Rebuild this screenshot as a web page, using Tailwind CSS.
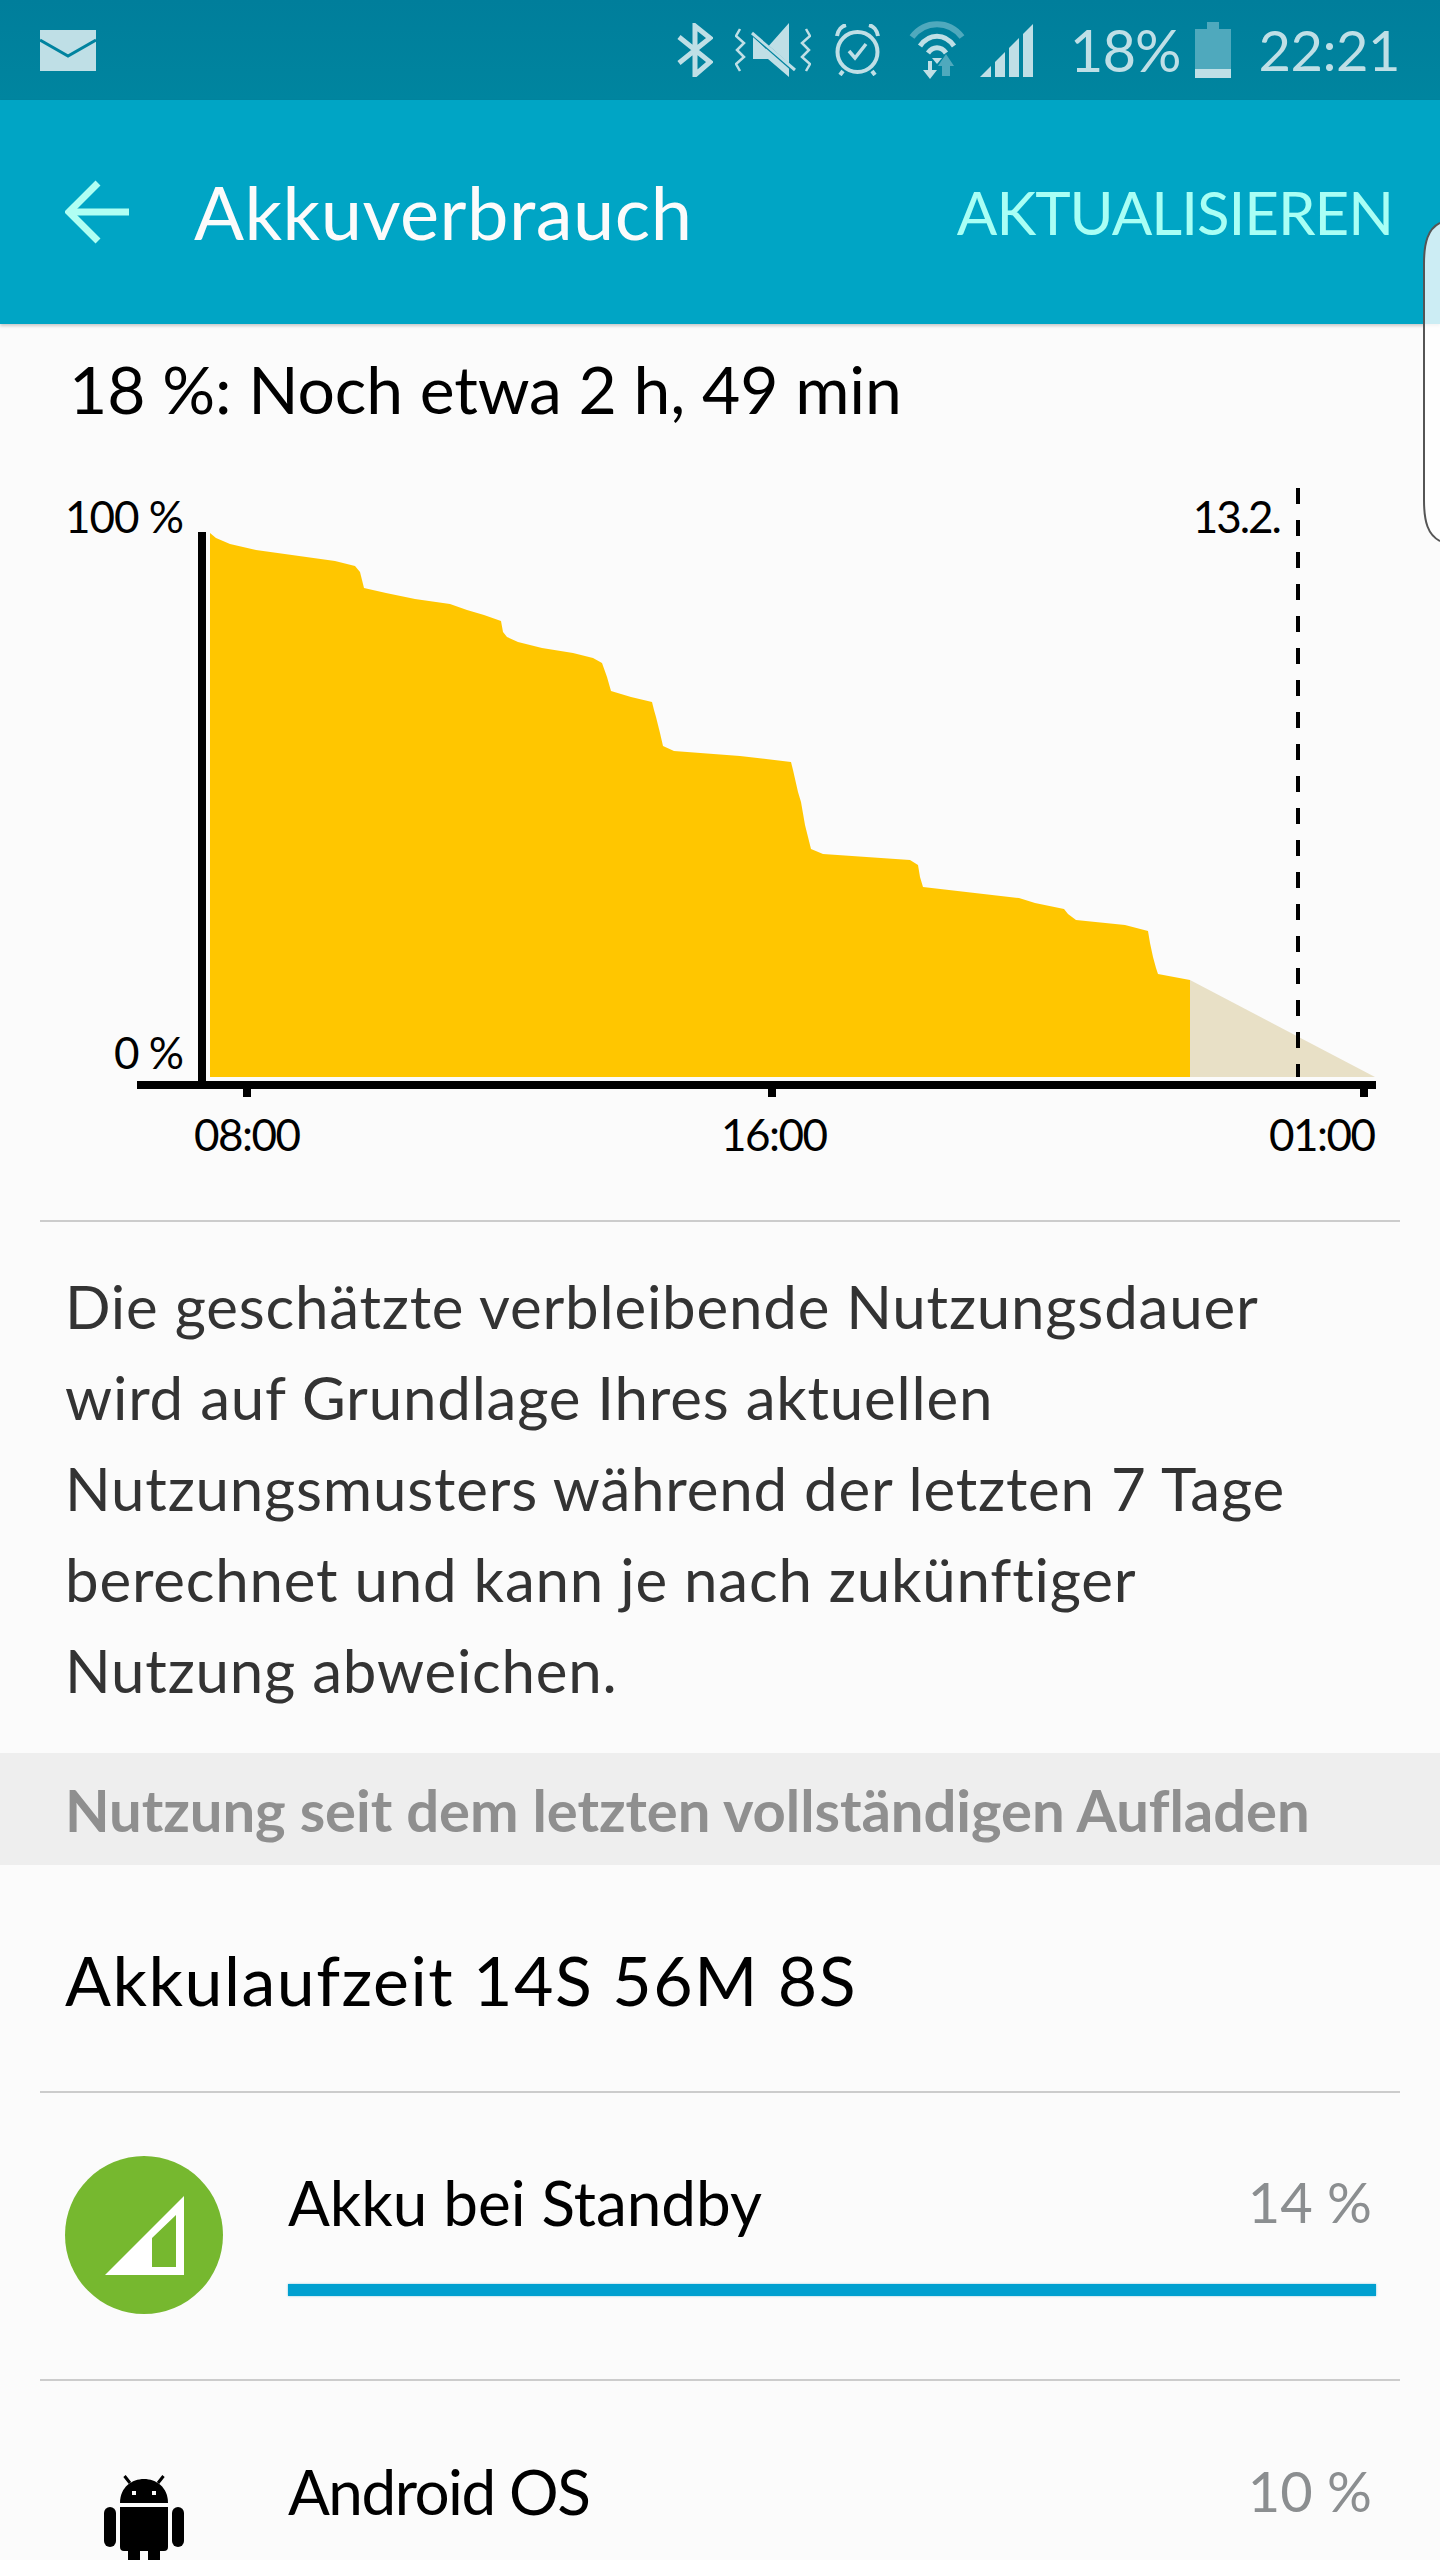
<!DOCTYPE html>
<html lang="de">
  <head>
    <meta charset="UTF-8" />
    <meta name="viewport" content="width=device-width, initial-scale=1.0" />
    <title>Akkuverbrauch</title>
    <script src="https://cdn.jsdelivr.net/npm/@tailwindcss/browser@4"></script>
  </head>
  <body class="relative w-[1440px] h-[2560px] overflow-hidden bg-[#fbfbfb] [font-family:Lato,sans-serif]">
    <!-- status bar -->
    <div class="flex items-center h-[100px] bg-gradient-to-b from-[#007e9b] to-[#00859f] text-[#bfdfe6]">
      <svg class="ml-[40px] w-[56px] h-[41px]" viewBox="0 0 56 41">
        <rect width="56" height="41" fill="#bfdfe6" />
        <polyline points="0,10 28,26 56,10" fill="none" stroke="#00839f" stroke-width="3" />
      </svg>
      <div class="ml-auto mr-[40px] flex items-center">
        <svg class="w-[36px] h-[54px]" viewBox="0 0 36 54">
          <polyline points="2,14 33,39 18,52 18,3 33,15 2,40" fill="none" stroke="#bfdfe6" stroke-width="5" />
        </svg>
        <svg class="ml-[22px] w-[76px] h-[54px]" viewBox="0 0 76 54">
          <polyline points="5,6 1,13 9,20 2,27 9,34 1,41 5,48" fill="none" stroke="#bfdfe6" stroke-width="2.5" />
          <polyline points="71,6 75,13 67,20 74,27 67,34 75,41 71,48" fill="none" stroke="#bfdfe6" stroke-width="2.5" />
          <path d="M18 13 L31 26 L54 0 V54 L33 36 H18 Z" fill="#bfdfe6" />
          <line x1="14" y1="8" x2="62" y2="50" stroke="#00839f" stroke-width="4" />
          <line x1="17" y1="10" x2="60" y2="47" stroke="#bfdfe6" stroke-width="3" />
        </svg>
        <svg class="ml-[23px] w-[47px] h-[52px]" viewBox="0 0 47 52">
          <circle cx="23.5" cy="28" r="20" fill="none" stroke="#bfdfe6" stroke-width="4" />
          <polyline points="15,27 21,34 32,20" fill="none" stroke="#bfdfe6" stroke-width="3.5" />
          <path d="M3 12 C4 6 8 2 12 1 M44 12 C43 6 39 2 35 1" fill="none" stroke="#bfdfe6" stroke-width="4" />
          <path d="M9 47 L6 51 M38 47 L41 51" fill="none" stroke="#bfdfe6" stroke-width="4" />
        </svg>
        <svg class="ml-[28px] w-[56px] h-[60px]" viewBox="0 0 56 60">
          <path d="M3 17 C16 0 40 0 53 17" fill="none" stroke="#4fa9bd" stroke-width="6" />
          <path d="M11 26 C20 13 36 13 45 26" fill="none" stroke="#bfdfe6" stroke-width="5" />
          <path d="M19 33 C24 26 32 26 37 33" fill="none" stroke="#bfdfe6" stroke-width="5" />
          <path d="M23 38 H33 L28 44 Z" fill="#bfdfe6" />
          <path d="M19 41 H23 V50 H28 L21 59 L14 50 H19 Z" fill="#bfdfe6" />
          <path d="M37 34 L45 46 H41 V56 H33 V46 H29 Z" fill="#4fa9bd" />
        </svg>
        <svg class="ml-[15px] w-[53px] h-[53px]" viewBox="0 0 53 53">
          <polygon points="0,53 11,42 11,53" fill="#bfdfe6" />
          <polygon points="15,53 15,38 25,28 25,53" fill="#bfdfe6" />
          <polygon points="29,53 29,24 39,14 39,53" fill="#bfdfe6" />
          <polygon points="43,53 43,10 53,0 53,53" fill="#bfdfe6" />
        </svg>
        <span class="ml-[37px] text-[58px] leading-none tracking-[-1px]">18%</span>
        <svg class="ml-[14px] w-[36px] h-[56px]" viewBox="0 0 36 56">
          <rect x="12" width="12" height="8" fill="#4fa9bd" />
          <rect y="7" width="36" height="40" fill="#4fa9bd" />
          <rect y="47" width="36" height="9" fill="#bfdfe6" />
        </svg>
        <span class="ml-[28px] text-[56px] leading-none tracking-[-0.5px]">22:21</span>
      </div>
    </div>

    <!-- action bar -->
    <div class="flex items-center h-[224px] bg-[#00a5c5] shadow-[0_2px_3px_rgba(0,0,0,0.2)]">
      <svg class="ml-[65px] w-[64px] h-[64px]" viewBox="0 0 64 64">
        <polyline points="33,3 4,32 33,61" fill="none" stroke="#b0fff3" stroke-width="7" />
        <line x1="6" y1="32" x2="64" y2="32" stroke="#b0fff3" stroke-width="7" />
      </svg>
      <h1 class="ml-[65px] text-[74px] leading-none tracking-[0.5px] text-[#fbfbfb]">Akkuverbrauch</h1>
      <span class="ml-auto mr-[47px] text-[60px] leading-none text-[#a9fff5] tracking-[-1px]">AKTUALISIEREN</span>
    </div>

    <!-- side panel handle -->
    <svg class="absolute right-0 top-[222px] w-[17px] h-[320px]" viewBox="0 0 17 320">
      <path d="M17 1 C5 7 1 20 1 42 V278 C1 300 5 313 17 319" fill="#fff" fill-opacity="0.8" stroke="#555" stroke-width="2" />
    </svg>

    <main class="flex flex-col">
      <p class="ml-[69px] mt-[25px] mb-[3px] text-[66px] leading-[80px] tracking-[-0.1px] text-black">18 %: Noch etwa 2 h, 49 min</p>

      <!-- chart -->
      <div class="relative h-[788px]">
        <svg class="absolute left-0 top-0" width="1440" height="816" viewBox="0 432 1440 816">
          <polygon fill="#e8e0c6" points="1190,980 1375,1077 1190,1077" />
          <polygon fill="#ffc600" points="210,533 216,538 230,544 256,550 335,561 355,566 360,572 362,580 364,588 386,593 415,599 450,604 467,610 484,615 501,621 503,632 507,637 518,642 542,648 573,653 593,658 602,663 607,677 611,691 631,697 652,702 654,710 656,717 658,725 660,733 663,746 674,751 740,756 791,762 793,770 798,792 801,802 805,825 808,837 811,849 823,854 910,860 918,865 920,877 923,887 1019,898 1035,903 1064,909 1068,914 1076,920 1125,925 1148,931 1150,943 1153,957 1156,968 1158,974 1190,980 1190,1077 210,1077" />
          <rect x="198" y="532" width="8" height="549" fill="#000" />
          <rect x="137" y="1081" width="1239" height="8" fill="#000" />
          <rect x="243" y="1089" width="8" height="8" fill="#000" />
          <rect x="768" y="1089" width="8" height="8" fill="#000" />
          <rect x="1360" y="1089" width="8" height="8" fill="#000" />
          <line x1="1298" y1="488" x2="1298" y2="1077" stroke="#000" stroke-width="4" stroke-dasharray="16 16" />
        </svg>
        <span class="absolute right-[1257px] top-[62px] text-[44px] leading-none tracking-[-1px] text-black">100 %</span>
        <span class="absolute right-[1257px] top-[598px] text-[44px] leading-none tracking-[-1px] text-black">0 %</span>
        <span class="absolute right-[160px] top-[62px] text-[44px] leading-none tracking-[-2px] text-black">13.2.</span>
        <span class="absolute left-[194px] top-[680px] text-[44px] leading-none tracking-[-1.5px] text-black">08:00</span>
        <span class="absolute left-[721px] top-[680px] text-[44px] leading-none tracking-[-1.5px] text-black">16:00</span>
        <span class="absolute left-[1269px] top-[680px] text-[44px] leading-none tracking-[-1.5px] text-black">01:00</span>
      </div>

      <div class="mx-[40px] h-[2px] bg-[#ccc]"></div>

      <p class="px-[65px] pt-[39px] text-[60px] leading-[91px] tracking-[0.8px] text-[#333]">
        Die geschätzte verbleibende Nutzungsdauer<br />
        wird auf Grundlage Ihres aktuellen<br />
        Nutzungsmusters während der letzten 7 Tage<br />
        berechnet und kann je nach zukünftiger<br />
        Nutzung abweichen.
      </p>

      <div class="mt-[37px] flex items-center h-[112px] px-[65px] bg-[#eee] text-[58px] font-bold tracking-[-0.07px] text-[#8f8f8f]">
        Nutzung seit dem letzten vollständigen Aufladen
      </div>

      <div class="flex items-center h-[226px] pt-[3px] px-[65px] text-[68px] tracking-[1.5px] text-black">Akkulaufzeit 14S 56M 8S</div>
      <div class="mx-[40px] h-[2px] bg-[#ccc]"></div>

      <!-- usage rows -->
      <div class="relative flex h-[286px]">
        <div class="ml-[65px] mt-[63px] flex items-center justify-center w-[158px] h-[158px] rounded-full bg-[#76b82f]">
          <svg class="w-[79px] h-[79px]" viewBox="0 0 79 79">
            <path fill-rule="evenodd" fill="#fff" d="M0 79 L79 0 V79 Z M47 71 H71 V19 L47 42 Z" />
          </svg>
        </div>
        <div class="ml-[65px] mt-[73px] w-[1088px]">
          <div class="flex items-center justify-between pr-[4px]">
            <span class="text-[62px] leading-[72px] text-black">Akku bei Standby</span>
            <span class="text-[56px] leading-[72px] text-[#8b8e90]">14 %</span>
          </div>
          <div class="mt-[46px] h-[12px] bg-[#00a0d0] shadow-[0_0_2px_rgba(0,160,208,0.5)]"></div>
        </div>
      </div>
      <div class="mx-[40px] h-[2px] bg-[#ccc]"></div>

      <div class="relative flex">
        <svg class="ml-[104px] mt-[94px] w-[80px] h-[86px]" viewBox="0 0 80 86">
          <path d="M16 28 C16 12 28 4 40 4 C52 4 64 12 64 28 Z" fill="#000" />
          <path d="M20.5 1 L26 8 M59.5 1 L54 8" stroke="#000" stroke-width="3" />
          <rect x="28" y="16" width="4" height="4" fill="#fbfbfb" />
          <rect x="48" y="16" width="4" height="4" fill="#fbfbfb" />
          <path d="M16 32 H64 V72 Q64 76 60 76 H56 V86 H44 V76 H36 V86 H24 V76 H20 Q16 76 16 72 Z" fill="#000" />
          <rect x="0" y="32" width="12" height="40" rx="6" fill="#000" />
          <rect x="68" y="32" width="12" height="40" rx="6" fill="#000" />
        </svg>
        <div class="ml-[104px] mt-[74px] w-[1088px] h-[72px] pr-[4px] flex items-center justify-between">
          <span class="text-[62px] leading-[72px] tracking-[-1.5px] text-black">Android OS</span>
          <span class="text-[56px] leading-[72px] text-[#8b8e90]">10 %</span>
        </div>
      </div>
    </main>
  </body>
</html>
